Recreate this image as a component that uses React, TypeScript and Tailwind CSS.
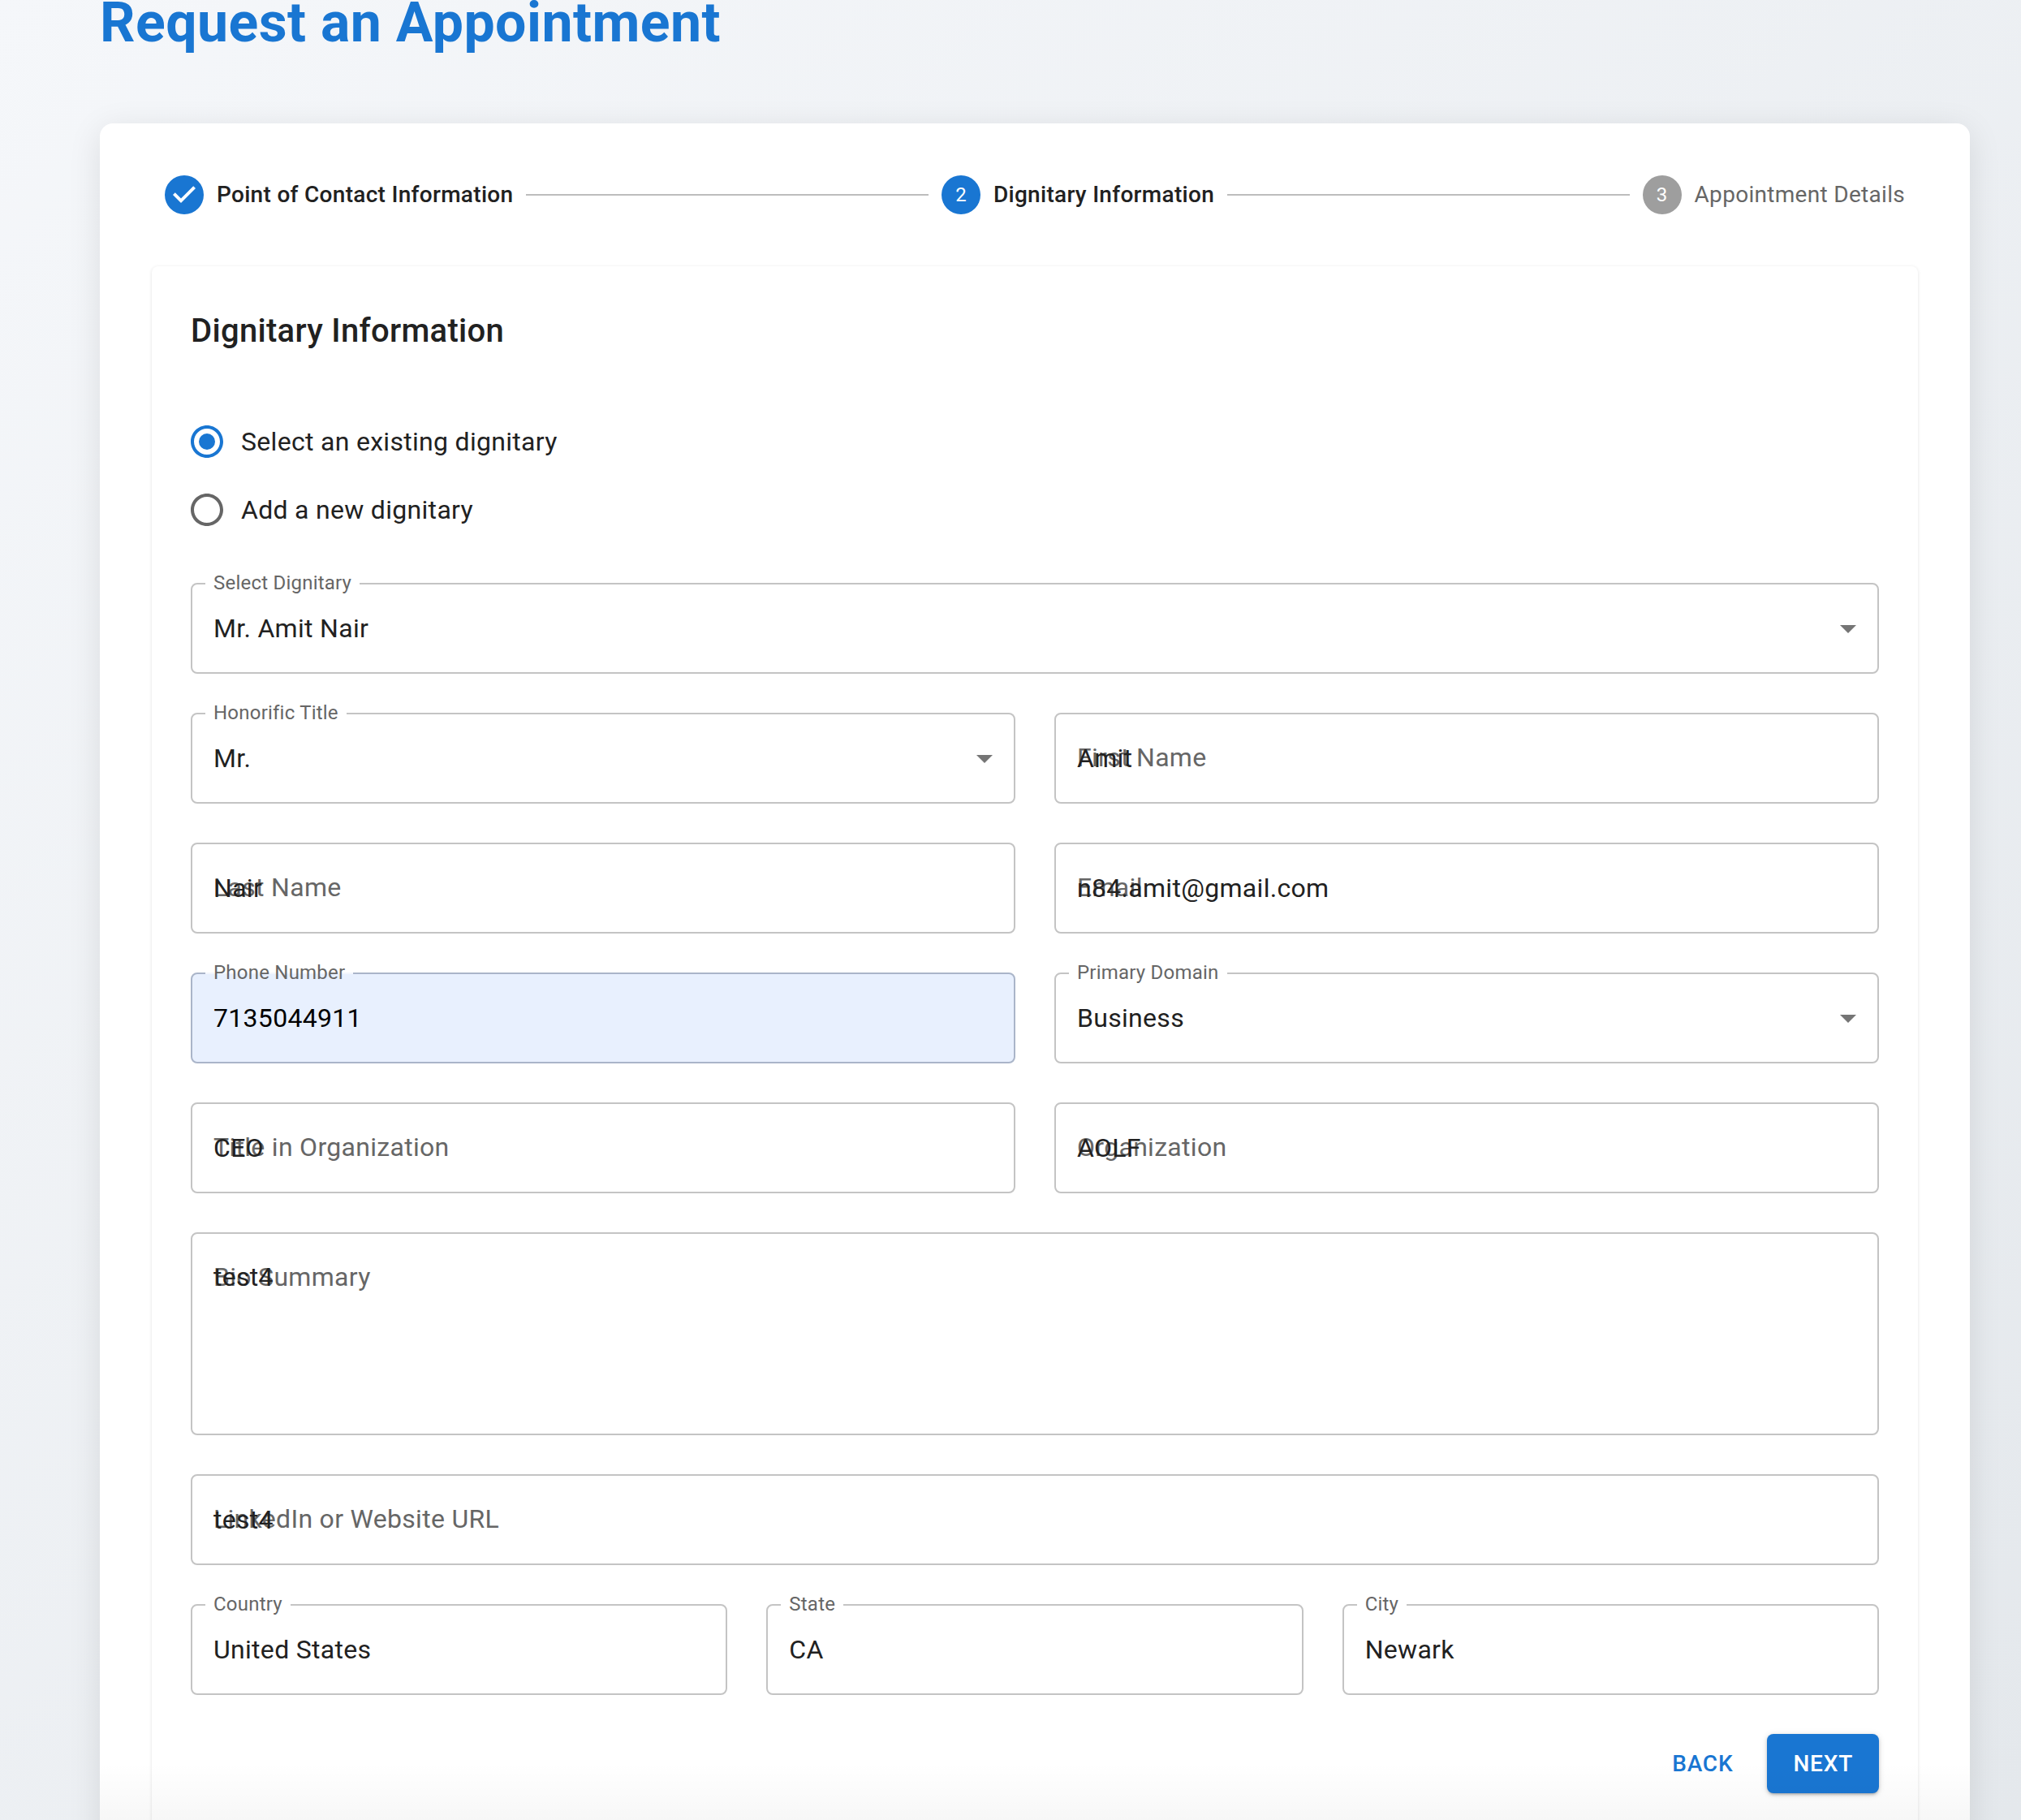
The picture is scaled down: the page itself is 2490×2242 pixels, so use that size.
const roboto = { fontFamily: 'Roboto, "Liberation Sans", sans-serif' }

function ArrowDrop() {
  return (
    <svg viewBox="0 0 24 24" className="absolute right-[12px] top-1/2 -translate-y-1/2 w-[48px] h-[48px] fill-[#757575]">
      <path d="M7 10l5 5 5-5z" />
    </svg>
  )
}

type FieldProps = {
  label: string
  value: string
  floated?: boolean
  select?: boolean
  autofill?: boolean
  multiline?: boolean
}

function Field({ label, value, floated, select, autofill, multiline }: FieldProps) {
  const border = autofill ? 'border-[#aab5c9]' : 'border-[#c4c4c4]'
  const fill = autofill ? 'bg-[#e8f0fe]' : 'bg-white'
  const notch = autofill ? 'bg-[#f3f6fd]' : 'bg-white'
  return (
    <div className={`relative rounded-lg border-2 ${border} ${fill} ${multiline ? 'h-[250px] pt-[30px]' : 'h-[112px] flex items-center'} pl-[26px] pr-[26px]`}>
      {floated ? (
        <span className="absolute left-[16px] -top-[17px] h-[30px] flex items-center px-[10px] text-[24px] leading-[30px] tracking-[0.22px] text-[#666666] whitespace-nowrap">
          <span className={`absolute left-0 right-0 top-[15px] h-[2px] ${notch}`} />
          <span className="relative">{label}</span>
        </span>
      ) : (
        <span className="absolute left-[26px] top-[30px] text-[32px] leading-[46px] tracking-[0.3px] text-[#666666] whitespace-nowrap">{label}</span>
      )}
      <span className={`relative text-[32px] leading-[46px] tracking-[0.3px] block ${autofill ? 'text-black' : 'text-[#212121]'}`}>{value}</span>
      {select && <ArrowDrop />}
    </div>
  )
}

function Radio({ label, checked }: { label: string; checked?: boolean }) {
  return (
    <div className="flex items-center h-[84px]">
      <svg viewBox="0 0 24 24" className={`w-[48px] h-[48px] -ml-[4px] ${checked ? 'fill-[#1976d2]' : 'fill-[#666666]'}`}>
        <path d="M12 2C6.48 2 2 6.48 2 12s4.48 10 10 10 10-4.48 10-10S17.52 2 12 2zm0 18c-4.42 0-8-3.58-8-8s3.58-8 8-8 8 3.58 8 8-3.58 8-8 8z" />
        {checked && <circle cx="12" cy="12" r="5" />}
      </svg>
      <span className="ml-[18px] text-[32px] tracking-[0.3px] text-[#212121]">{label}</span>
    </div>
  )
}

function Step({ label, state, n }: { label: string; state: 'done' | 'active' | 'todo'; n?: number }) {
  return (
    <div className="flex items-center shrink-0">
      {state === 'done' ? (
        <svg viewBox="0 0 24 24" className="w-[48px] h-[48px] fill-[#1976d2]">
          <path d="M12 0a12 12 0 1 0 0 24 12 12 0 0 0 0-24zm-2 17l-5-5 1.4-1.4 3.6 3.6 7.6-7.6L19 8l-9 9z" />
        </svg>
      ) : (
        <div className={`w-[48px] h-[48px] rounded-full flex items-center justify-center text-[24px] text-white ${state === 'active' ? 'bg-[#1976d2]' : 'bg-[#9e9e9e]'}`}>{n}</div>
      )}
      <span className={`ml-[16px] text-[28px] leading-[40px] tracking-[0.3px] ${state === 'todo' ? 'text-[#666666]' : 'text-[#212121] font-medium'}`}>{label}</span>
    </div>
  )
}

function Connector() {
  return <div className="flex-1 mx-[16px] h-[2px] bg-[#bdbdbd]" />
}

export default function App() {
  return (
    <div style={roboto} className="relative h-[2242px] overflow-hidden bg-gradient-to-br from-[#f5f7fa] to-[#e4e8ec] pl-[123px] pr-[63px]">
      <h1 className="-mt-[14px] mb-[82px] h-[84px] text-[68px] leading-[84px] tracking-[0.45px] font-bold text-[#1976d2] whitespace-nowrap">Request an Appointment</h1>

      <div className="bg-white rounded-2xl shadow-[0_8px_40px_rgba(0,0,0,0.1)] px-[64px] pt-[64px] pb-[200px]">
        <div className="flex items-center px-[16px] mb-[64px]">
          <Step label="Point of Contact Information" state="done" />
          <Connector />
          <Step label="Dignitary Information" state="active" n={2} />
          <Connector />
          <Step label="Appointment Details" state="todo" n={3} />
        </div>

        <div className="rounded-lg shadow-[0_1px_4px_rgba(0,0,0,0.12)] p-[48px] pb-[200px]">
          <h2 className="text-[40px] leading-[64px] tracking-[0.3px] font-medium text-[#212121] mb-[62px]">Dignitary Information</h2>

          <div className="mb-[48px]">
            <Radio label="Select an existing dignitary" checked />
            <Radio label="Add a new dignitary" />
          </div>

          <div className="flex flex-col gap-[48px]">
            <Field label="Select Dignitary" value="Mr. Amit Nair" floated select />
            <div className="grid grid-cols-2 gap-[48px]">
              <Field label="Honorific Title" value="Mr." floated select />
              <Field label="First Name" value="Amit" />
              <Field label="Last Name" value="Nair" />
              <Field label="Email" value="n84.amit@gmail.com" />
              <Field label="Phone Number" value="7135044911" floated autofill />
              <Field label="Primary Domain" value="Business" floated select />
              <Field label="Title in Organization" value="CEO" />
              <Field label="Organization" value="AOLF" />
            </div>
            <Field label="Bio Summary" value="test4" multiline />
            <Field label="LinkedIn or Website URL" value="test4" />
            <div className="grid grid-cols-3 gap-[48px]">
              <Field label="Country" value="United States" floated />
              <Field label="State" value="CA" floated />
              <Field label="City" value="Newark" floated />
            </div>
          </div>

          <div className="flex justify-end items-center gap-[26px] mt-[48px]">
            <button className="px-[16px] h-[73px] text-[28px] font-medium tracking-[0.8px] text-[#1976d2]">BACK</button>
            <button className="px-[32px] h-[73px] rounded-lg bg-[#1976d2] text-[28px] font-medium tracking-[0.8px] text-white shadow-[0_3px_3px_-2px_rgba(0,0,0,0.2),0_2px_4px_rgba(0,0,0,0.14),0_1px_8px_rgba(0,0,0,0.12)]">NEXT</button>
          </div>
        </div>
      </div>

      {/* fade at the bottom of the card */}
      <div className="absolute left-[123px] right-[63px] bottom-0 h-[70px] bg-gradient-to-b from-transparent to-[rgba(0,0,0,0.03)]" />
    </div>
  )
}
